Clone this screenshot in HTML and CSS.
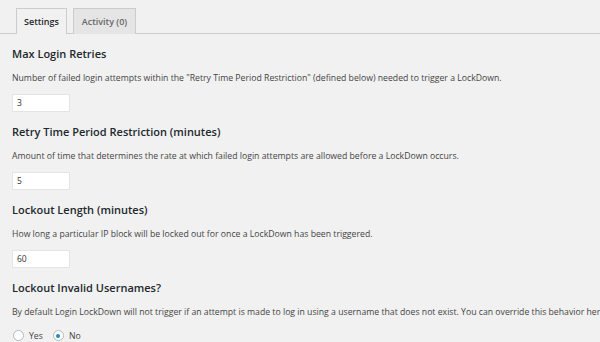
FILE: index.html
```html
<!DOCTYPE html>
<html>
<head>
<meta charset="utf-8">
<link rel="stylesheet" href="styles.css">
</head>
<body>
<div class="page">
  <div class="tabs">
    <div class="tab active">Settings</div>
    <div class="tab wide">Activity (0)</div>
  </div>
  <div class="section">
    <h3 class="title">Max Login Retries</h3>
    <p class="desc">Number of failed login attempts within the "Retry Time Period Restriction" (defined below) needed to trigger a LockDown.</p>
    <div class="field">3</div>
  </div>
  <div class="section">
    <h3 class="title">Retry Time Period Restriction (minutes)</h3>
    <p class="desc">Amount of time that determines the rate at which failed login attempts are allowed before a LockDown occurs.</p>
    <div class="field">5</div>
  </div>
  <div class="section">
    <h3 class="title">Lockout Length (minutes)</h3>
    <p class="desc">How long a particular IP block will be locked out for once a LockDown has been triggered.</p>
    <div class="field">60</div>
  </div>
  <div class="section">
    <h3 class="title">Lockout Invalid Usernames?</h3>
    <p class="desc nowrap">By default Login LockDown will not trigger if an attempt is made to log in using a username that does not exist. You can override this behavior here.</p>
    <div class="radios">
      <span class="radio"></span><span class="rlabel">Yes</span>
      <span class="radio checked"></span><span class="rlabel">No</span>
    </div>
  </div>
</div>
</body>
</html>
```
FILE: styles.css
```css
html, body {
  margin: 0;
  padding: 0;
  background: #f1f1f1;
  overflow: hidden;
}
body {
  width: 600px;
  height: 342px;
  font-family: "Open Sans", "Noto Sans", sans-serif;
  color: #444;
}
.page {
  padding: 0 0 0 12px;
}
.tabs {
  display: flex;
  gap: 6px;
  margin-left: -12px;
  padding: 8px 0 0 16px;
  border-bottom: 1px solid #ccc;
  height: 25px;
}
.tab {
  box-sizing: border-box;
  width: 51px;
  height: 26px;
  border: 1px solid #ccc;
  border-bottom: none;
  background: #e5e5e5;
  color: #666;
  font-size: 9px;
  font-weight: 600;
  line-height: 25px;
  text-align: center;
}
.tab.wide {
  width: 63px;
}
.tab.active {
  background: #f1f1f1;
  color: #23282d;
}
.section {
  display: flex;
  flex-direction: column;
}
.title {
  margin: 13px 0 0;
  font-size: 11px;
  font-weight: 600;
  color: #23282d;
  line-height: 14px;
}
.section:first-of-type .title {
  margin-top: 10px;
}
.desc {
  margin: 11px 0 0;
  font-size: 8.7px;
  line-height: 12px;
  color: #444;
}
.nowrap {
  white-space: nowrap;
}
.field {
  box-sizing: border-box;
  width: 58px;
  height: 18px;
  margin-top: 10px;
  background: #fff;
  border: 1px solid #e4e4e4;
  font-size: 8.5px;
  line-height: 16px;
  padding-left: 4px;
  color: #333;
}
.radios {
  display: flex;
  align-items: center;
  height: 11px;
  margin-top: 12px;
  font-size: 8.7px;
  color: #444;
}
.radio {
  box-sizing: border-box;
  width: 11px;
  height: 11px;
  border-radius: 50%;
  border: 1px solid #b4b9be;
  background: #fff;
  display: flex;
  align-items: center;
  justify-content: center;
  margin-left: 1px;
}
.radio.checked::after {
  content: "";
  width: 4px;
  height: 4px;
  border-radius: 50%;
  background: #1e8cbe;
}
.rlabel {
  margin: 0 9px 0 5px;
}
```
